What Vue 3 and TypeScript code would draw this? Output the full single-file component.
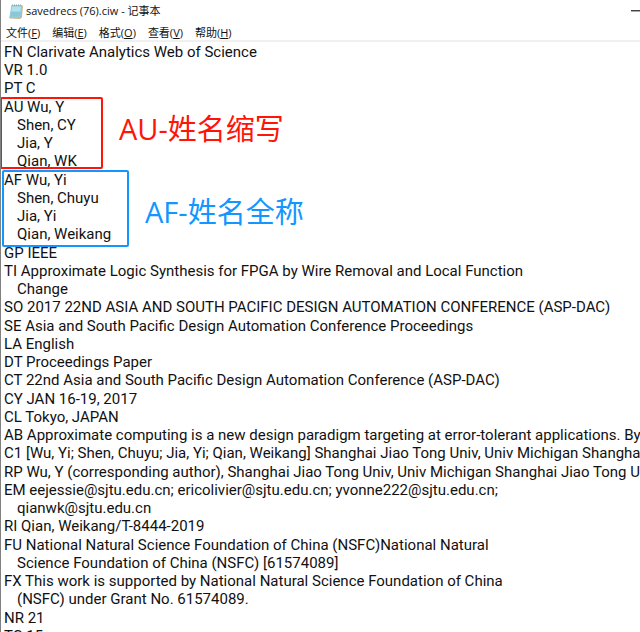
<script setup lang="ts">
interface MenuItem {
  label: string
  key: string
}

interface Block {
  lines: string[]
  mark?: 'short' | 'full'
  note?: string
}

const menus: MenuItem[] = [
  { label: '文件', key: 'F' },
  { label: '编辑', key: 'E' },
  { label: '格式', key: 'O' },
  { label: '查看', key: 'V' },
  { label: '帮助', key: 'H' },
]

// A leading space marks a continuation line of the field above it.
const blocks: Block[] = [
  { lines: ['FN Clarivate Analytics Web of Science', 'VR 1.0', 'PT C'] },
  {
    lines: ['AU Wu, Y', ' Shen, CY', ' Jia, Y', ' Qian, WK'],
    mark: 'short',
    note: 'AU-姓名缩写',
  },
  {
    lines: ['AF Wu, Yi', ' Shen, Chuyu', ' Jia, Yi', ' Qian, Weikang'],
    mark: 'full',
    note: 'AF-姓名全称',
  },
  {
    lines: [
      'GP IEEE',
      'TI Approximate Logic Synthesis for FPGA by Wire Removal and Local Function',
      ' Change',
      'SO 2017 22ND ASIA AND SOUTH PACIFIC DESIGN AUTOMATION CONFERENCE (ASP-DAC)',
    ],
  },
  {
    lines: [
      'SE Asia and South Pacific Design Automation Conference Proceedings',
      'LA English',
      'DT Proceedings Paper',
      'CT 22nd Asia and South Pacific Design Automation Conference (ASP-DAC)',
    ],
  },
  {
    lines: [
      'CY JAN 16-19, 2017',
      'CL Tokyo, JAPAN',
      'AB Approximate computing is a new design paradigm targeting at error-tolerant applications. By',
      'C1 [Wu, Yi; Shen, Chuyu; Jia, Yi; Qian, Weikang] Shanghai Jiao Tong Univ, Univ Michigan Shanghai',
    ],
  },
  {
    lines: [
      'RP Wu, Y (corresponding author), Shanghai Jiao Tong Univ, Univ Michigan Shanghai Jiao Tong U',
      'EM eejessie@sjtu.edu.cn; ericolivier@sjtu.edu.cn; yvonne222@sjtu.edu.cn;',
      ' qianwk@sjtu.edu.cn',
      'RI Qian, Weikang/T-8444-2019',
    ],
  },
  {
    lines: [
      'FU National Natural Science Foundation of China (NSFC)National Natural',
      ' Science Foundation of China (NSFC) [61574089]',
      'FX This work is supported by National Natural Science Foundation of China',
      ' (NSFC) under Grant No. 61574089.',
    ],
  },
  { lines: ['NR 21', 'TC 15'] },
]
</script>

<template>
  <div class="window">
    <header class="titlebar">
      <svg class="app-icon" viewBox="0 0 14 15" aria-hidden="true">
        <path d="M3 1.500 L14 1.500 L13 13.500 L11 15 L0.500 14.500 Z" fill="#c9b999" />
        <path d="M2.500 1 L13 1 L11.500 14 L0.300 14 Z" fill="#8fcbdc" />
        <path d="M3.200 2.500 L12 2.500 L11.300 7.500 L2.400 7.500 Z" fill="#b4e2ec" />
        <path d="M2.500 9 H11.500 M2 11 H11" stroke="#7fbccf" stroke-width="0.500" />
        <path d="M3.500 0.300 V2 M5.500 0.300 V2 M7.500 0.300 V2 M9.500 0.300 V2 M11.500 0.300 V2" stroke="#8fa5ac" stroke-width="0.700" />
      </svg>
      <h1 class="title">savedrecs (76).ciw - 记事本</h1>
      <button class="minimize" type="button" aria-label="最小化">
        <svg viewBox="0 0 9 2" aria-hidden="true">
          <path d="M0 0 H9 V1 H0 Z" fill="#444" />
          <path d="M0 1 H9 V2 H0 Z" fill="#aaa" />
        </svg>
      </button>
    </header>

    <nav class="menubar">
      <button v-for="m in menus" :key="m.key" class="menu" type="button">{{ m.label }}(<u>{{ m.key }}</u>)</button>
    </nav>

    <main class="document">
      <section v-for="(b, i) in blocks" :key="i" class="block">
        <p v-for="(line, j) in b.lines" :key="j" class="line" :class="{ continued: line.startsWith(' ') }">{{ line.trim() }}</p>
        <div v-if="b.mark" class="mark" :class="b.mark">
          <span class="note">{{ b.note }}</span>
        </div>
      </section>
    </main>
  </div>
</template>

<style>
body {
  margin: 0;
  overflow: hidden;
}
</style>

<style scoped>
.window {
  box-sizing: border-box;
  height: 100vh;
  overflow: hidden;
  border-left: 1px solid #808080;
  background: #fff;
  color: #111;
  font-family: "Open Sans", "Noto Sans CJK SC", sans-serif;
}

.titlebar {
  display: flex;
  align-items: center;
  height: 22px;
  padding-left: 8px;
}

.app-icon {
  width: 14px;
  height: 15px;
  margin-right: 3px;
}

.title {
  flex: 1;
  margin: 0;
  font-size: 11px;
  font-weight: 400;
  line-height: 22px;
}

.minimize {
  display: flex;
  padding: 0;
  border: 0;
  background: none;
}

.minimize svg {
  width: 9px;
  height: 2px;
}

.menubar {
  display: flex;
  gap: 12px;
  height: 18px;
  padding-left: 5px;
  border-bottom: 2px solid #f0f0f0;
}

.menu {
  padding: 2px 0 0;
  border: 0;
  background: none;
  color: inherit;
  font-family: inherit;
  font-size: 11px;
  line-height: 18px;
}

.document {
  display: flex;
  flex-direction: column;
  gap: 1px;
  padding: 1px 0 0 3px;
}

.block {
  position: relative;
}

.line {
  margin: 0;
  font-family: Roboto, sans-serif;
  font-size: 15px;
  line-height: 18px;
  white-space: nowrap;
}

.continued {
  padding-left: 13px;
}

.mark {
  position: absolute;
  top: -1px;
  box-sizing: border-box;
  border: 2px solid;
  border-radius: 2px;
}

.short {
  left: -4px;
  width: 103px;
  height: 72px;
  color: #ff1408;
}

.full {
  left: -2px;
  width: 127px;
  height: 77px;
  color: #1296ff;
}

.note {
  position: absolute;
  left: 100%;
  margin-left: 18px;
  font-size: 29px;
  line-height: 36px;
  white-space: nowrap;
}

.short .note {
  top: 12px;
}

.full .note {
  top: 22px;
}
</style>
